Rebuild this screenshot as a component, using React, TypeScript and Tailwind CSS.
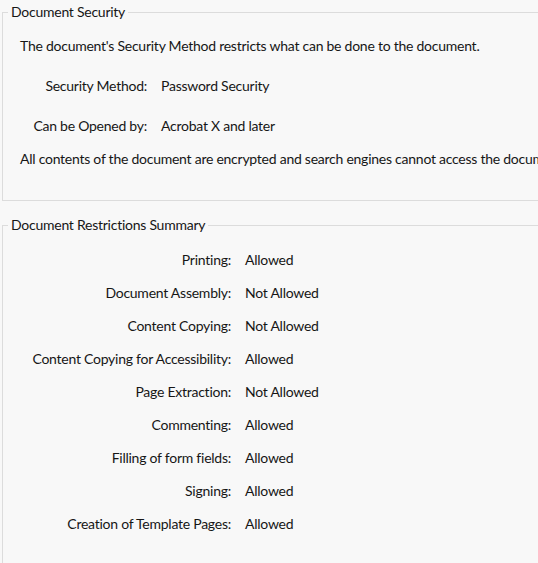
import React from "react";

const restrictions: [string, string][] = [
  ["Printing", "Allowed"],
  ["Document Assembly", "Not Allowed"],
  ["Content Copying", "Not Allowed"],
  ["Content Copying for Accessibility", "Allowed"],
  ["Page Extraction", "Not Allowed"],
  ["Commenting", "Allowed"],
  ["Filling of form fields", "Allowed"],
  ["Signing", "Allowed"],
  ["Creation of Template Pages", "Allowed"],
];

export default function App() {
  return (
    <div
      className="w-[538px] h-[563px] overflow-hidden bg-[#f8f8f8] text-[#161616] text-[14px] tracking-[-0.25px] whitespace-nowrap"
      style={{ fontFamily: "Lato, 'Liberation Sans', sans-serif" }}
    >
      <fieldset className="ml-[2px] mr-[-40px] border border-[#dcdcdc] m-0 p-0 min-w-0">
        <legend className="ml-[5px] px-[3px] h-[24px] leading-[24px]">Document Security</legend>
        <div className="pt-[12px] pb-[31px]">
          <div className="h-[20px] leading-[20px] pl-[17px]">
            The document's Security Method restricts what can be done to the document.
          </div>
          <div className="flex h-[20px] leading-[20px] mt-[20px]">
            <div className="w-[144px] text-right">Security Method:</div>
            <div className="ml-[14px]">Password Security</div>
          </div>
          <div className="flex h-[20px] leading-[20px] mt-[20px]">
            <div className="w-[144px] text-right">Can be Opened by:</div>
            <div className="ml-[14px]">Acrobat X and later</div>
          </div>
          <div className="h-[20px] leading-[20px] pl-[17px] mt-[13px]">
            All contents of the document are encrypted and search engines cannot access the document's metadata.
          </div>
        </div>
      </fieldset>
      <fieldset className="ml-[2px] mr-[-40px] mt-[12px] border border-[#dcdcdc] m-0 p-0 min-w-0 h-[400px]">
        <legend className="ml-[5px] px-[3px] h-[24px] leading-[24px]">Document Restrictions Summary</legend>
        <div className="pt-[6px]">
          {restrictions.map(([label, value]) => (
            <div key={label} className="flex h-[33px] items-center">
              <div className="w-[228px] text-right">{label}:</div>
              <div className="ml-[14px]">{value}</div>
            </div>
          ))}
        </div>
      </fieldset>
    </div>
  );
}
